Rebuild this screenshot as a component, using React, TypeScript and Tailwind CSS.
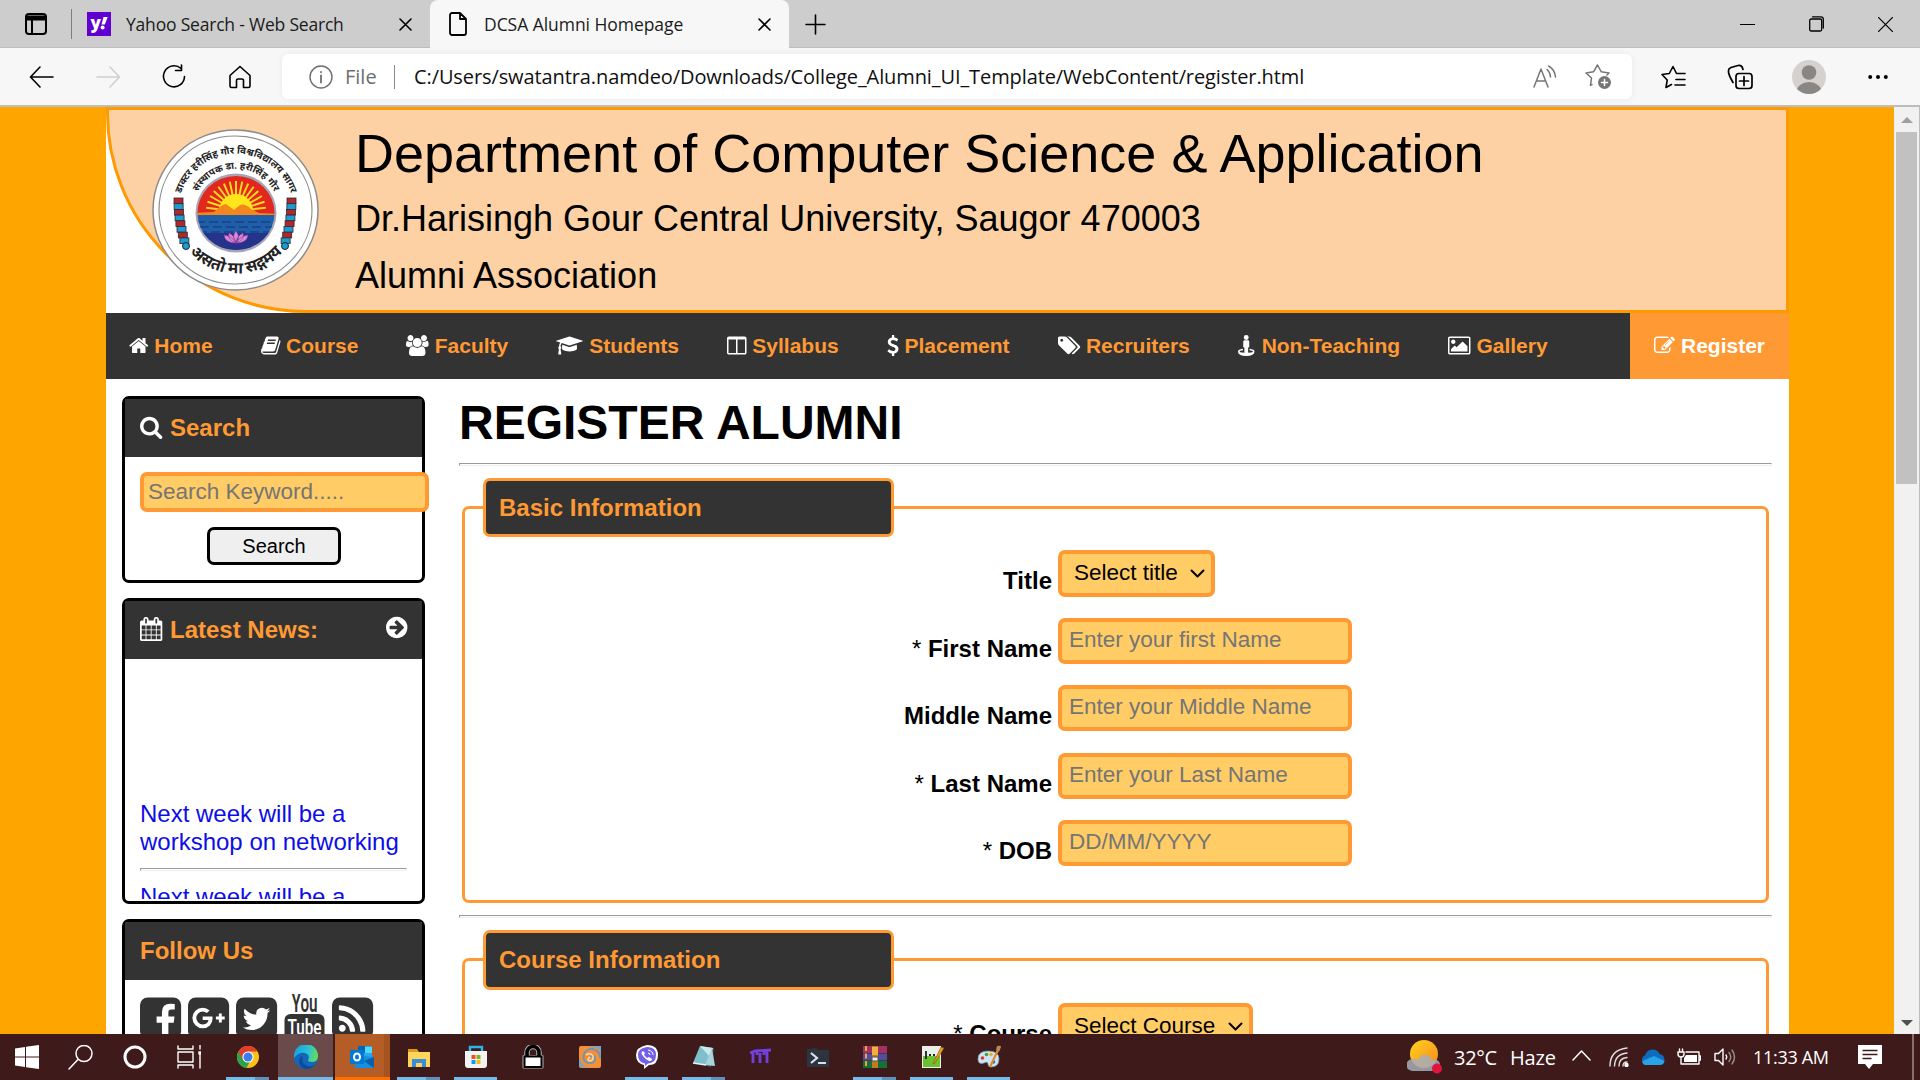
import React from "react";

type Glyph = { d: string; box: string; w: string };

const SQUARE = "v960q0 119-84.5 203.5t-203.5 84.5h-960q-119 0-203.5-84.5t-84.5-203.5v-960q0-119 84.5-203.5t203.5-84.5h960q119 0 203.5 84.5t84.5 203.5z";

const glyphs: Record<string, Glyph> = {
  home: { box: "64 0 1664 1792", w: "w-[0.93em]", d: "M1472 992v480q0 26-19 45t-45 19h-384v-384h-256v384h-384q-26 0-45-19t-19-45v-480q0-1 .5-3t.5-3l575-474 575 474q1 2 1 6zm223-69l-62 74q-8 9-21 11h-3q-13 0-21-7l-692-577-692 577q-12 8-24 7-13-2-21-11l-62-74q-8-10-7-23.5t11-21.5l719-599q32-26 76-26t76 26l244 204v-195q0-14 9-23t23-9h192q14 0 23 9t9 23v408l219 182q10 8 11 21.5t-7 23.5z" },
  book: { box: "64 0 1664 1792", w: "w-[0.93em]", d: "M1703 478q40 57 18 129l-275 906q-19 64-76.5 107.5t-122.5 43.5h-923q-77 0-148.5-53.5t-99.5-131.5q-24-67-2-127 0-4 3-27t4-37q1-8-3-21.5t-3-19.5q2-11 8-21t16.5-23.5 16.5-23.5q23-38 45-91.5t30-91.5q3-10 .5-30t-.5-28q3-11 17-28t17-23q21-36 42-92t25-90q1-9-2.5-32t.5-28q4-13 22-30.5t22-22.5q19-26 42.5-84.5t27.5-96.5q1-8-3-25.5t-2-26.5q2-8 9-18t18-23 17-21q8-12 16.5-30.5t15-35 16-36 19.5-32 26.5-23.5 36-11.5 47.5 5.5l-1 3q38-9 51-9h761q74 0 114 56t18 130l-274 906q-36 119-71.5 153.5t-128.5 34.5h-869q-27 0-38 15-11 16-1 43 24 70 144 70h923q29 0 56-15.5t35-41.5l300-987q7-22 5-57 38 15 59 43zm-1064 2q-4 13 2 22.5t20 9.5h608q13 0 25.5-9.5t16.5-22.5l21-64q4-13-2-22.5t-20-9.5h-608q-13 0-25.5 9.5t-16.5 22.5zm-83 256q-4 13 2 22.5t20 9.5h608q13 0 25.5-9.5t16.5-22.5l21-64q4-13-2-22.5t-20-9.5h-608q-13 0-25.5 9.5t-16.5 22.5z" },
  users: { box: "0 0 1920 1792", w: "w-[1.07em]", d: "M593 896q-162 5-265 128h-134q-82 0-138-40.5t-56-118.5q0-353 124-353 6 0 43.5 21t97.5 42.5 119 21.5q67 0 133-23-5 37-5 66 0 159 81 256zm1071 637q0 120-73 189.5t-194 69.5h-874q-121 0-194-69.5t-73-189.5q0-53 3.5-103.5t14-109 26.5-108.5 43-97.5 62-81 85.5-53.5 111.5-20q10 0 43 21.5t73 48 107 48 135 21.5 135-21.5 107-48 73-48 43-21.5q61 0 111.5 20t85.5 53.5 62 81 43 97.5 26.5 108.5 14 109 3.5 103.5zm-1024-1277q0 106-75 181t-181 75-181-75-75-181 75-181 181-75 181 75 75 181zm704 384q0 159-112.5 271.5t-271.5 112.5-271.5-112.5-112.5-271.5 112.5-271.5 271.5-112.5 271.5 112.5 112.5 271.5zm576 225q0 78-56 118.5t-138 40.5h-134q-103-123-265-128 93-126 93-284 0-29-5-66 66 23 133 23 59 0 119-21.5t97.5-42.5 43.5-21q124 0 124 353zm-128-609q0 106-75 181t-181 75-181-75-75-181 75-181 181-75 181 75 75 181z" },
  cap: { box: "0 0 2304 1792", w: "w-[1.286em]", d: "M1774 836l18 316q4 69-82 128t-235 93.5-323 34.5-323-34.5-235-93.5-82-128l18-316 574 181q22 7 48 7t48-7zm530-324q0 23-22 31l-1120 352q-4 1-10 1t-10-1l-652-206q-43 34-71 111.5t-34 178.5q63 36 63 109 0 69-58 107l58 433q2 14-8 25-9 11-24 11h-192q-15 0-24-11-10-11-8-25l58-433q-58-38-58-107 0-73 65-111 11-207 98-330l-333-104q-22-8-22-31t22-31l1120-352q4-1 10-1t10 1l1120 352q22 8 22 31z" },
  columns: { box: "64 0 1664 1792", w: "w-[0.93em]", d: "M224 1536h608v-1152h-640v1120q0 13 9.5 22.5t22.5 9.5zm1376-32v-1120h-640v1152h608q13 0 22.5-9.5t9.5-22.5zm128-1216v1216q0 66-47 113t-113 47h-1344q-66 0-113-47t-47-113v-1216q0-66 47-113t113-47h1344q66 0 113 47t47 113z" },
  usd: { box: "384 0 1024 1792", w: "w-[0.571em]", d: "M1362 1185q0 153-99.5 263.5t-258.5 136.5v175q0 14-9 23t-23 9h-135q-13 0-22.5-9.5t-9.5-22.5v-175q-66-9-127.5-31t-101.5-44.5-74-48-46.5-37.5-17.5-18q-17-21-2-41l103-135q7-10 23-12 15-2 24 9l2 2q113 99 243 125 37 8 74 8 81 0 142.5-43t61.5-122q0-28-15-53t-33.5-42-58.5-37.5-66-32-80-32.5q-39-16-61.5-25t-61.5-26.5-62.5-31-56.5-35.5-53.5-42.5-43.5-49-35.5-58-21-66.5-8.5-78q0-138 98-242t255-134v-180q0-13 9.5-22.5t22.5-9.5h135q14 0 23 9t9 23v176q57 6 110.5 23t87 33.5 63.5 37.5 39 29 15 14q17 18 5 38l-81 146q-8 15-23 16-14 3-27-7-3-3-14.5-12t-39-26.5-58.5-32-74.5-26-85.5-11.5q-95 0-155 43t-60 111q0 26 8.5 48t29.5 41.5 39.5 33 56 31 60.5 27 70 27.5q53 20 81 31.5t76 35 75.5 42.5 62 50 53 63.5 31.5 76.5 13 94z" },
  tags: { box: "128 0 1920 1792", w: "w-[1.07em]", d: "M576 448q0-53-37.5-90.5t-90.5-37.5-90.5 37.5-37.5 90.5 37.5 90.5 90.5 37.5 90.5-37.5 37.5-90.5zm1067 576q0 53-37 90l-491 492q-39 37-91 37-53 0-90-37l-715-716q-38-37-64.5-101t-26.5-117v-416q0-52 38-90t90-38h416q53 0 117 26.5t102 64.5l715 714q37 39 37 91zm384 0q0 53-37 90l-491 492q-39 37-91 37-36 0-59-14t-53-45l470-470q37-37 37-90 0-52-37-91l-715-714q-38-38-102-64.5t-117-26.5h224q53 0 117 26.5t102 64.5l715 714q37 39 37 91z" },
  street: { box: "192 0 1536 1792", w: "w-[0.857em]", d: "M896 0a210 210 0 1 1 0 420a210 210 0 0 1 0-420zM768 450h256q128 0 128 128v420q0 64-64 64h-32v380q0 64-64 64h-192q-64 0-64-64v-380h-32q-64 0-64-64v-420q0-128 128-128zM600 1165l22 127q-302 42-302 116 0 100 576 100t576-100q0-74-302-116l22-127q408 60 408 243 0 384-704 384t-704-384q0-183 408-243z" },
  image: { box: "-64 0 1920 1792", w: "w-[1.07em]", d: "M576 576q0 80-56 136t-136 56-136-56-56-136 56-136 136-56 136 56 56 136zm1024 384v448h-1408v-192l320-320 160 160 512-512zm96-704h-1600q-13 0-22.5 9.5t-9.5 22.5v1216q0 13 9.5 22.5t22.5 9.5h1600q13 0 22.5-9.5t9.5-22.5v-1216q0-13-9.5-22.5t-22.5-9.5zm160 32v1216q0 66-47 113t-113 47h-1600q-66 0-113-47t-47-113v-1216q0-66 47-113t113-47h1600q66 0 113 47t47 113z" },
  edit: { box: "0 0 1792 1792", w: "w-[1em]", d: "M888 1184l116-116-152-152-116 116v56h96v96h56zm440-720q-16-16-33 1l-350 350q-17 17-1 33t33-1l350-350q17-17 1-33zm80 594v190q0 119-84.5 203.5t-203.5 84.5h-832q-119 0-203.5-84.5t-84.5-203.5v-832q0-119 84.5-203.5t203.5-84.5h832q63 0 117 25 15 7 18 23 3 17-9 29l-49 49q-14 14-32 8-23-6-45-6h-832q-66 0-113 47t-47 113v832q0 66 47 113t113 47h832q66 0 113-47t47-113v-126q0-13 9-22l64-64q15-15 35-7t20 29zm-96-738l288 288-672 672h-288v-288zm444 132l-92 92-288-288 92-92q28-28 68-28t68 28l152 152q28 28 28 68t-28 68z" },
  search: { box: "64 0 1664 1792", w: "w-[0.93em]", d: "M1216 832q0-185-131.5-316.5t-316.5-131.5-316.5 131.5-131.5 316.5 131.5 316.5 316.5 131.5 316.5-131.5 131.5-316.5zm512 832q0 52-38 90t-90 38q-54 0-90-38l-343-342q-179 124-399 124-143 0-273.5-55.5t-225-150-150-225-55.5-273.5 55.5-273.5 150-225 225-150 273.5-55.5 273.5 55.5 225 150 150 225 55.5 273.5q0 220-124 399l343 343q37 37 37 90z" },
  calendar: { box: "64 0 1664 1792", w: "w-[0.93em]", d: "M192 1664h288v-288h-288v288zm352 0h320v-288h-320v288zm-352-352h288v-320h-288v320zm352 0h320v-320h-320v320zm-352-384h288v-288h-288v288zm736 736h320v-288h-320v288zm-384-736h320v-288h-320v288zm768 736h288v-288h-288v288zm-384-352h320v-320h-320v320zm-352-864v-288q0-13-9.5-22.5t-22.5-9.5h-64q-13 0-22.5 9.5t-9.5 22.5v288q0 13 9.5 22.5t22.5 9.5h64q13 0 22.5-9.5t9.5-22.5zm736 864h288v-320h-288v320zm-384-384h320v-288h-320v288zm384 0h288v-288h-288v288zm32-480v-288q0-13-9.5-22.5t-22.5-9.5h-64q-13 0-22.5 9.5t-9.5 22.5v288q0 13 9.5 22.5t22.5 9.5h64q13 0 22.5-9.5t9.5-22.5zm384-64v1280q0 52-38 90t-90 38h-1408q-52 0-90-38t-38-90v-1280q0-52 38-90t90-38h128v-96q0-66 47-113t113-47h64q66 0 113 47t47 113v96h384v-96q0-66 47-113t113-47h64q66 0 113 47t47 113v96h128q52 0 90 38t38 90z" },
  arrow: { box: "128 0 1536 1792", w: "w-[0.857em]", d: "M1413 896q0-27-18-45l-91-91-362-362q-18-18-45-18t-45 18l-91 91q-18 18-18 45t18 45l189 189h-502q-26 0-45 19t-19 45v128q0 26 19 45t45 19h502l-189 189q-19 19-19 45t19 45l91 91q18 18 45 18t45-18l362-362 91-91q18-18 18-45zm251 0q0 209-103 385.5t-279.5 279.5-385.5 103-385.5-103-279.5-279.5-103-385.5 103-385.5 279.5-279.5 385.5-103 385.5 103 279.5 279.5 103 385.5z" },
  facebook: { box: "128 0 1536 1792", w: "w-[0.857em]", d: "M1376 128q119 0 203.5 84.5t84.5 203.5v960q0 119-84.5 203.5t-203.5 84.5h-188v-595h199l30-232h-229v-148q0-56 23.5-84t91.5-28l122-1v-207q-63-9-178-9-136 0-217.5 80t-81.5 226v171h-200v232h200v595h-532q-119 0-203.5-84.5t-84.5-203.5v-960q0-119 84.5-203.5t203.5-84.5h960z" },
  google: { box: "128 0 1536 1792", w: "w-[0.857em]", d: "M1045 905q0-26-6-64h-362v132h217q-3 24-16.5 50t-37.5 53-66.5 44.5-96.5 17.5q-99 0-169-71t-70-171 70-171 169-71q92 0 153 59l104-101q-108-100-257-100-160 0-272 112.5t-112 271.5 112 271.5 272 112.5q165 0 266.5-105t101.5-270zm345 46h109v-110h-109v-110h-110v110h-110v110h110v110h110v-110zm274-535" + SQUARE },
  twitter: { box: "128 0 1536 1792", w: "w-[0.857em]", d: "M1408 610q-56 25-121 34 68-40 93-117-65 38-134 51-61-66-153-66-87 0-148.5 61.5t-61.5 148.5q0 29 5 48-129-7-242-65t-192-155q-29 50-29 106 0 114 91 175-47-1-100-26v2q0 75 50 133.5t123 72.5q-29 8-51 8-13 0-39-4 21 63 74.5 104t121.5 42q-116 90-261 90-26 0-50-3 148 94 322 94 112 0 210-35.5t168-95 120.5-137 75-162 24.5-168.5q0-18-1-27 63-45 105-109zm256-194" + SQUARE },
  rss: { box: "128 0 1536 1792", w: "w-[0.857em]", d: "M640 1280q0-53-37.5-90.5t-90.5-37.5-90.5 37.5-37.5 90.5 37.5 90.5 90.5 37.5 90.5-37.5 37.5-90.5zm351 94q-13-232-177-396t-396-177q-14-1-24 9t-10 23v128q0 13 8.5 22t21.5 10q154 11 264 121t121 264q1 13 10 21.5t22 8.5h128q13 0 23-10t9-24zm384 1q-5-154-56-297.5t-139.5-260-205-205-260-139.5-297.5-56q-14-1-23 9-10 10-10 23v128q0 13 9 22t22 10q204 7 378 111.5t278.5 278.5 111.5 378q1 13 10 22t22 9h128q13 0 23-10 11-9 9-23zM1664 416" + SQUARE },
};

function Fa({ name, className = "" }: { name: string; className?: string }) {
  const g = glyphs[name];
  return (
    <svg viewBox={g.box} className={`inline-block h-[1em] align-[-0.143em] overflow-visible fill-current ${g.w} ${className}`}>
      <path d={g.d} />
    </svg>
  );
}

const ui = "font-['Open_Sans','Noto_Sans',sans-serif]";

function Line({ d, w = 24, h = 24, sw = 1.6, className = "", children }: { d?: string; w?: number; h?: number; sw?: number; className?: string; children?: React.ReactNode }) {
  return (
    <svg width={w} height={h} viewBox={`0 0 ${w} ${h}`} fill="none" stroke="currentColor" strokeWidth={sw} strokeLinecap="round" strokeLinejoin="round" className={`shrink-0 ${className}`}>
      {d && <path d={d} />}
      {children}
    </svg>
  );
}

function TabBar() {
  return (
    <div className={`flex h-12 shrink-0 items-start bg-[#cdcdcd] text-[17.5px] text-[#1b1b1b] ${ui}`}>
      <div className="flex h-12 w-[430px] items-center pl-[25px] shadow-[inset_0_-1px_0_#bdbdbd]">
        <Line w={22} h={22} className="text-black" sw={2}>
          <rect x="1" y="1" width="20" height="20" rx="3" />
          <path d="M1 4h20M1 6h20" strokeWidth="3" />
          <path d="M7 7v13" />
        </Line>
        <div className="ml-6 h-[30px] w-px bg-[#7d7d7d]" />
        <svg width="24" height="24" viewBox="0 0 24 24" className="ml-[15px]">
          <path d="M0 0h24v24H0z" fill="#6001d2" />
          <text x="3.5" y="17" fill="#fff" fontSize="17" fontWeight="800" fontFamily="Open Sans">y</text>
          <path d="M16.5 5h4.2l-2.8 7.5h-3.4z" fill="#fff" />
          <circle cx="15.6" cy="15.6" r="2" fill="#fff" />
        </svg>
        <span className="ml-[15px] w-[273px] whitespace-nowrap tracking-[-0.2px]">Yahoo Search - Web Search</span>
        <Line w={13} h={13} d="M1 1l11 11M12 1L1 12" className="text-black" />
      </div>
      <div className="flex h-12 w-[359px] items-center rounded-t-lg bg-[#f7f7f7] pl-[19px]">
        <Line w={18} h={24} sw={1.8} d="M3 1h8l6 6v14a2 2 0 0 1-2 2H3a2 2 0 0 1-2-2V3a2 2 0 0 1 2-2zM11 1v6h6" className="text-black" />
        <span className="ml-[17px] w-[274px] whitespace-nowrap tracking-[-0.05px]">DCSA Alumni Homepage</span>
        <Line w={13} h={13} d="M1 1l11 11M12 1L1 12" className="text-black" />
      </div>
      <div className="flex h-12 flex-1 items-center pl-4 pr-[27px] text-black shadow-[inset_0_-1px_0_#bdbdbd]">
        <Line w={21} h={21} d="M10.5 1v19M1 10.5h19" />
        <div className="flex-1" />
        <Line w={15} h={15} sw={1.2} d="M0 7.5h15" className="mr-[54px]" />
        <Line w={15} h={16} sw={1.3} className="mr-[54px]">
          <rect x="0.7" y="3" width="12" height="12" rx="1.5" />
          <path d="M3.5 0.8h8.5q2.3 0 2.3 2.3v9" />
        </Line>
        <Line w={15} h={15} sw={1.2} d="M0 0l15 15M15 0L0 15" />
      </div>
    </div>
  );
}

function Toolbar() {
  return (
    <div className={`flex h-[57px] shrink-0 items-center bg-[#f7f7f7] pl-[29px] text-black ${ui}`}>
      <Line w={25} h={22} d="M11 1L1.5 11l9.500 10M2 11h22" />
      <Line w={25} h={22} d="M14 1l9.500 10-9.500 10M1 11h22" className="ml-[42px] text-[#cfcfcf]" />
      <Line w={26} h={25} className="ml-10" d="M23.500 12.500a10.500 10.500 0 1 1-3.500-8M20.500 1v5.500h-6" />
      <Line w={24} h={24} className="ml-[41px]" d="M2 10.500L12 1.500l10 9v10.500a1.500 1.500 0 0 1-1.500 1.500H15.500v-7a1.500 1.500 0 0 0-1.500-1.500h-4a1.500 1.500 0 0 0-1.500 1.500v7H3.500a1.500 1.500 0 0 1-1.500-1.500z" />
      <div className="ml-[30px] flex h-[45px] w-[1350px] items-center rounded-md bg-white pl-[27px] text-[20px] shadow-[0_0_6px_rgba(0,0,0,0.06)]">
        <Line w={24} h={24} className="text-[#6e6e6e]" sw={1.4}>
          <circle cx="12" cy="12" r="11" />
          <path d="M12 10.500v7M12 7v.3" strokeWidth="1.800" />
        </Line>
        <span className="ml-[12px] w-[49px] text-[20px] text-[#6e6e6e]">File</span>
        <div className="h-6 w-px bg-[#8a8a8a]" />
        <span className="ml-[19px] w-[1119px] whitespace-nowrap text-[20px] tracking-[-0.1px] text-[#101010]">C:/Users/swatantra.namdeo/Downloads/College_Alumni_UI_Template/WebContent/register.html</span>
        <Line w={24} h={24} className="text-[#767676]" sw={1.5} d="M1 22L8 4l7 18M3.500 16h9M14 4.500q3 2.500 3.500 7.500M15.500 1q6 3 7 11" />
        <Line w={27} h={27} className="ml-7 text-[#767676]" sw={1.5}>
          <path d="M7 21.500l-1.500 1 1-7.500-5.500-5 7.500-1.200L12.500 2l3.800 6.800 7.700 1.200-2 2" />
          <circle cx="19.500" cy="19.500" r="6.500" fill="currentColor" stroke="none" />
          <path d="M19.500 16.500v6M16.500 19.500h6" stroke="#fff" />
        </Line>
      </div>
      <Line w={26} h={24} className="ml-[29px]" sw={1.6} d="M10.500 19.500l-5.500 3 1.200-7.500L1 9.500l7.300-1L12 1.500l3.500 7h8.500M15 14.500h9M14 20h10" />
      <Line w={26} h={26} className="ml-10" sw={1.700}>
        <path d="M6 18.500Q1 10 1.500 6.500Q1.500 4.500 4 3.500L11 1.500q4-1 5 4" />
        <rect x="9" y="9.500" width="16" height="15" rx="3" />
        <path d="M17 12.500v9M12.500 17h9" />
      </Line>
      <svg width="34" height="34" viewBox="0 0 34 34" className="ml-[39px]">
        <defs><clipPath id="avatar"><circle cx="17" cy="17" r="17" /></clipPath></defs>
        <g clipPath="url(#avatar)">
          <path d="M0 0h34v34H0z" fill="#d4d1ce" />
          <circle cx="17" cy="12.500" r="7.300" fill="#8a8683" />
          <ellipse cx="17" cy="32" rx="12.500" ry="10" fill="#8a8683" />
        </g>
      </svg>
      <svg width="20" height="6" viewBox="0 0 20 6" className="ml-[42px]"><circle cx="2.200" cy="3" r="2" /><circle cx="10" cy="3" r="2" /><circle cx="17.800" cy="3" r="2" /></svg>
    </div>
  );
}

const rays = Array.from({ length: 15 }, (_, i) => (Math.PI * (i + 0.5)) / 15);
const bands = [0, 1, 2, 3, 4, 5, 6, 7];

function Logo() {
  return (
    <svg width="167" height="162" viewBox="0 0 167 162" className="shrink-0">
      <defs>
        <path id="arcOuter" d="M27 72A58 58 0 0 1 141 72" />
        <path id="arcInner" d="M42 72A43.500 43.500 0 0 1 126 72" />
        <path id="arcLower" d="M28 109A62 62 0 0 0 140 109" />
        <clipPath id="disc"><ellipse cx="84" cy="84" rx="38.500" ry="37" /></clipPath>
      </defs>
      <ellipse cx="83.500" cy="81" rx="82.500" ry="80" fill="#fff" stroke="#8b8b8b" strokeWidth="1.500" />
      <ellipse cx="83.500" cy="81" rx="76.500" ry="74" fill="none" stroke="#8e8e8e" strokeWidth="1.200" />
      <g fill="#222" fontWeight="700" fontFamily="Noto Sans Devanagari, Noto Sans, sans-serif" textAnchor="middle">
        <text fontSize="9.800"><textPath href="#arcOuter" startOffset="50%">डाक्टर हरीसिंह गौर विश्वविद्यालय सागर</textPath></text>
        <text fontSize="9.600"><textPath href="#arcInner" startOffset="50%">संस्थापक डा. हरीसिंह गौर</textPath></text>
        <text fontSize="16"><textPath href="#arcLower" startOffset="50%">असतो मा सद्गमय</textPath></text>
      </g>
      <ellipse cx="84" cy="84" rx="40.500" ry="39.500" fill="#a8a4b8" />
      <g clipPath="url(#disc)">
        <path d="M40 40h90v45H40z" fill="#e2271d" />
        {rays.map((a) => (
          <path key={a} stroke="#ffd91f" strokeWidth="2" d={`M${84 - Math.cos(a) * 13} ${82 - Math.sin(a) * 13}L${84 - Math.cos(a) * 30} ${82 - Math.sin(a) * 30}`} />
        ))}
        <circle cx="84" cy="82" r="17" fill="#ffe51a" />
        <path d="M42 84l20-1q8-8 12-8l8 6 6-5q5-2 11 4l8 4 22 1v3H42z" fill="#f5851f" />
        <path d="M40 86h90v40H40z" fill="#1f5fa8" />
        <path d="M44 93h78M48 98h72M46 103h74" stroke="#1b3f8c" strokeWidth="1.500" strokeDasharray="9 4" />
        <path d="M40 104h90v26H40z" fill="#26338b" />
        <path d="M84 114q-5-6 0-12 5 6 0 12q-9-3-7-10 6 3 7 10q9-3 7-10-6 3-7 10q-11 0-12-8 8 1 12 8q11 0 12-8-8 1-12 8" fill="#d98ad6" stroke="#8f3aa0" strokeWidth=".6" />
      </g>
      {bands.map((i) => {
        const y = 69 + i * 5.7;
        const x = 22 + i * i * 0.12;
        return (
          <g key={i} fill={i % 2 ? "#1e9bd0" : "#b3262c"} stroke="#2a2a33" strokeWidth=".8">
            <rect x={x} y={y} width="9" height="5.700" />
            <rect x={159 - x} y={y} width="9" height="5.700" transform="translate(-2 0)" />
          </g>
        );
      })}
      <circle cx="34" cy="117" r="3.500" fill="#1e9bd0" stroke="#222" />
      <circle cx="133" cy="117" r="3.500" fill="#1e9bd0" stroke="#222" />
    </svg>
  );
}

function Header() {
  return (
    <header className="flex h-[206px] shrink-0 rounded-bl-[200px] border-[3px] border-[#ff9900] bg-[#fed1a4] pl-[43px] pt-[19px]">
      <Logo />
      <div className="ml-[36px] whitespace-nowrap text-black">
        <div className="-mt-1.5 text-[54px] leading-[60px]">Department of Computer Science &amp; Application</div>
        <div className="mt-4 text-[36px] leading-10">Dr.Harisingh Gour Central University, Saugor 470003</div>
        <div className="mt-[17px] text-[36px] leading-10">Alumni Association</div>
      </div>
    </header>
  );
}

const nav = [
  ["home", "Home"], ["book", "Course"], ["users", "Faculty"], ["cap", "Students"], ["columns", "Syllabus"],
  ["usd", "Placement"], ["tags", "Recruiters"], ["street", "Non-Teaching"], ["image", "Gallery"],
];

function Nav() {
  return (
    <nav className="flex h-[66px] shrink-0 items-center bg-[#333] text-[21px] font-bold leading-6 text-[#ff9933]">
      {nav.map(([icon, label]) => (
        <a key={label} className="whitespace-nowrap px-6 first:pl-[23px]"><Fa name={icon} className="text-white" /> {label}</a>
      ))}
      <a className="ml-auto flex h-full items-center bg-[#ff9933] px-6 text-white"><span className="whitespace-nowrap"><Fa name="edit" /> Register</span></a>
    </nav>
  );
}

function Panel({ title, icon, extra, className, children }: { title: string; icon?: string; extra?: React.ReactNode; className: string; children: React.ReactNode }) {
  return (
    <section className={`shrink-0 rounded-[7px] border-[3px] border-black bg-white ${className}`}>
      <h2 className="flex h-[58px] items-center bg-[#333] px-[15px] text-[24px] font-bold leading-7 text-[#ff9933]">
        <span className="whitespace-nowrap">{icon && <><Fa name={icon} className="mr-px text-white" /> </>}{title}</span>
        {extra}
      </h2>
      {children}
    </section>
  );
}

const Rule = ({ className = "" }: { className?: string }) => <div className={`h-[3px] shrink-0 border border-[#9a9a9a] border-b-[#eee] border-r-[#eee] ${className}`} />;

function Sidebar() {
  return (
    <aside className="flex w-[303px] shrink-0 flex-col gap-[15px] pt-[17px]">
      <Panel title="Search" icon="search" className="h-[187px]">
        <div className="flex flex-col items-start pl-[15px] pt-[15px]">
          <input placeholder="Search Keyword....." className="h-10 w-[289px] shrink-0 rounded-[7px] border-4 border-[#ff9933] bg-[#ffcc66] px-1 pb-px text-[22.5px] placeholder:text-[#757575]" />
          <button className="ml-[67px] mt-[15px] h-[38px] w-[134px] rounded-[7px] border-[3px] border-black bg-[#efefef] text-[20px] leading-7 text-black">Search</button>
        </div>
      </Panel>
      <Panel title="Latest News:" icon="calendar" className="h-[306px]" extra={<Fa name="arrow" className="ml-auto -mt-1.5 text-[25px] text-white" />}>
        <div className="mx-[15px] flex h-[240px] flex-col overflow-hidden pt-[141px] text-[24px] leading-7 text-[#0d0de8]">
          <p className="shrink-0">Next week will be a workshop on networking</p>
          <Rule className="mb-2.5 mt-3" />
          <p className="shrink-0 pt-[2px]">Next week will be a workshop on networking</p>
        </div>
      </Panel>
      <Panel title="Follow Us" className="h-[220px]">
        <div className="flex gap-[6.900px] pl-[15px] pt-[14px] text-[48px] text-[#333]">
          <Fa name="facebook" />
          <Fa name="google" />
          <Fa name="twitter" />
          <svg width="41" height="48" viewBox="0 0 41 48" fill="#333" fontFamily="Roboto, sans-serif" fontWeight="600">
            <text x="7.500" y="18" fontSize="25" textLength="26" lengthAdjust="spacingAndGlyphs">You</text>
            <rect x="0.500" y="20" width="40" height="27" rx="6" />
            <text x="3.500" y="41" fontSize="22" textLength="34" lengthAdjust="spacingAndGlyphs" fill="#fff">Tube</text>
          </svg>
          <Fa name="rss" />
        </div>
      </Panel>
    </aside>
  );
}

function Legend({ children, height }: { children: string; height: string }) {
  return <div className={`-mt-[31px] ml-[18px] flex w-[411px] shrink-0 items-center rounded-[7px] border-[3px] border-[#ff9933] bg-[#333] px-[13px] text-[24px] font-bold leading-7 text-[#ff9933] ${height}`}>{children}</div>;
}

function Label({ text, required }: { text: string; required?: boolean }) {
  return <label className="mr-[6px] w-[587px] pt-[17px] text-right text-[24px] font-bold leading-7 text-black">{required && <span className="font-normal">* </span>}{text}</label>;
}

function Select({ label, width }: { label: string; width: string }) {
  return (
    <div className={`flex h-[47px] items-center justify-between rounded-[7px] border-4 border-[#ff9933] bg-[#ffcc66] pb-0.5 pl-[12px] pr-[6px] text-[22.5px] leading-[27px] text-black ${width}`}>
      <span className="whitespace-nowrap">{label}</span>
      <Line w={15} h={9} sw={2} d="M1.500 1.500l6 6 6-6" className="mt-0.5" />
    </div>
  );
}

const fields: [string, boolean, string][] = [
  ["First Name", true, "Enter your first Name"],
  ["Middle Name", false, "Enter your Middle Name"],
  ["Last Name", true, "Enter your Last Name"],
  ["DOB", true, "DD/MM/YYYY"],
];

function Main() {
  return (
    <main className="ml-[34px] flex w-[1313px] shrink-0 flex-col pt-4 text-black">
      <h1 className="h-[68px] shrink-0 text-[48px] font-bold leading-[56px]">REGISTER ALUMNI</h1>
      <Rule />
      <div className="ml-[3px] mt-10 flex h-[397px] w-[1307px] shrink-0 flex-col rounded-[7px] border-[3px] border-[#ff9933]">
        <Legend height="h-[59px]">Basic Information</Legend>
        <div className="mt-[13px] flex flex-col">
          <div className="flex h-[68px] items-start"><Label text="Title" /><Select label="Select title" width="w-[157px]" /></div>
          {fields.map(([text, required, hint]) => (
            <div key={text} className="flex h-[67.300px] items-start">
              <Label text={text} required={required} />
              <input placeholder={hint} className="h-[46px] w-[294px] rounded-[7px] border-4 border-[#ff9933] bg-[#ffcc66] px-[7px] pb-0.5 text-[22.5px] placeholder:text-[#757575]" />
            </div>
          ))}
        </div>
      </div>
      <Rule className="mt-3" />
      <div className="ml-[3px] mt-10 flex h-[397px] w-[1307px] shrink-0 flex-col rounded-[7px] border-[3px] border-[#ff9933]">
        <Legend height="h-[60px]">Course Information</Legend>
        <div className="mt-[13px] flex items-start"><Label text="Course" required /><Select label="Select Course" width="w-[195px]" /></div>
      </div>
    </main>
  );
}

const apps: Record<string, React.ReactNode> = {
  chrome: (
    <>
      <circle cx="12" cy="12" r="11" fill="#fbc116" />
      <path d="M12 12L2.500 6.500A11 11 0 0 0 10.500 23L15 14z" fill="#2ba24c" />
      <path d="M2.500 6.500A11 11 0 0 1 21.500 6.500H12L7 15z" fill="#e33b2e" />
      <circle cx="12" cy="12" r="5.600" fill="#fff" /><circle cx="12" cy="12" r="4.500" fill="#3b7ded" />
    </>
  ),
  edge: (
    <>
      <defs><linearGradient id="eg" x1="0" x2="1" y1=".3" y2="0.500"><stop stopColor="#1b9de2" /><stop offset=".6" stopColor="#2cc3cf" /><stop offset="1" stopColor="#67dd55" /></linearGradient></defs>
      <circle cx="12" cy="12" r="12" fill="#1168b8" />
      <path d="M0 11A12 12 0 0 1 24 11q0 6-6.500 6-4.500 0-3-3 1.500-5-4-6T0 13z" fill="url(#eg)" />
      <path d="M9 11q-3 7 4 10 5 2 9-3-3 6-10 6Q6 23 5 17q0-5 4-6z" fill="#0c4a9c" />
    </>
  ),
  outlook: (
    <>
      <path d="M8 1h14v13H8z" fill="#28a8ea" /><path d="M15 2h7v6h-7z" fill="#50d9ff" /><path d="M8 1h7v7H8z" fill="#0364b8" />
      <path d="M5 10l19 2v11H5z" fill="#1490df" /><path d="M24 12v11L14 16z" fill="#0a5fa8" />
      <path d="M0 5h14v14H0z" fill="#0078d4" /><ellipse cx="7" cy="12" rx="3" ry="3.500" fill="none" stroke="#fff" strokeWidth="2" />
    </>
  ),
  explorer: (<><path d="M1 4h9l2 3H1z" fill="#dd9a12" /><path d="M1 7h22v15H1z" fill="#fdd45c" /><path d="M5 22v-8h14v8h-4v-4H9v4z" fill="#3a8ddb" /></>),
  store: (
    <>
      <path d="M6 7V2h12v5" fill="none" stroke="#28b5e8" strokeWidth="2.400" /><path d="M1 6h22v14a3 3 0 0 1-3 3H4a3 3 0 0 1-3-3z" fill="#f3f3f3" />
      <path d="M7.500 10h4v4h-4z" fill="#f04f23" /><path d="M12.500 10h4v4h-4z" fill="#7db81a" /><path d="M7.500 15h4v4h-4z" fill="#05a3ef" /><path d="M12.500 15h4v4h-4z" fill="#fdb813" />
    </>
  ),
  lock: (<><path d="M6 11V7.500a6 6 0 0 1 12 0V11" fill="none" stroke="#b5b0b0" strokeWidth="5.500" /><rect x="1.500" y="10" width="21" height="13.500" rx="1" fill="#b5b0b0" /><path d="M6 12V7.500a6 6 0 0 1 12 0V12" fill="none" stroke="#000" strokeWidth="3.500" /><rect x="3.500" y="11.500" width="17" height="10.500" fill="#fff" stroke="#000" strokeWidth="2" /></>),
  swirl: (
    <>
      <rect x="1" y="1" width="22" height="22" rx="2" fill="#f0913a" />
      <path d="M10 1h13v10q-1-8-8-9-4 0-5-1zM1 12q2 8 9 10h-9z" fill="#7fa3c4" />
      <path d="M12 12q4-3 5 1 0 6-7 5-6-2-4-9 3-6 9-5 7 2 7 9" fill="none" stroke="#6f93b5" strokeWidth="1.800" />
      <path d="M12 12q-4 3 0 4 4-1 3-5-3-4-7-1" fill="none" stroke="#fcd7a8" strokeWidth="1.600" />
    </>
  ),
  viber: (<><path d="M12 0q11 0 11 10t-9 10l-5 4v-4Q1 18 1 10T12 0z" fill="#fff" /><path d="M12 2q9 0 9 8t-8 8.500L10 21v-2.500Q3 17 3 10t9-8z" fill="#7360e8" /><path d="M8 6q-3 1 0 5t6 5q3 0 3-2l-3-2-2 1-3-3 1-2z" fill="#fff" /><path d="M13 5q5 1 5 5M13 8q2 0 2 2" fill="none" stroke="#fff" /></>),
  notepad: (<><path d="M8 2l14 1-3 19-8-2z" fill="#2e5d68" /><path d="M8 1l13 2-7 17L1 18z" fill="#7fbfcb" /><path d="M8 1l13 2-4 8z" fill="#c8e9ee" /><path d="M20 3l3 18-10-1z" fill="#a9d3da" /><path d="M1 18l13 2" stroke="#e6f2f4" strokeWidth="1.500" /></>),
  comb: (<path d="M1 8l5-2 16-1M4 7v11M11 8v10M18 6v12M8 7v3M15 7v3" fill="none" stroke="#7040e0" strokeWidth="2.800" />),
  terminal: (<><path d="M1 4l9-1 2 2h11v17H1z" fill="#2c3440" /><path d="M5 8l6 5-6 5M12 18h8" fill="none" stroke="#dce1e7" strokeWidth="2.200" /></>),
  rar: (
    <>
      <path d="M0 1h24v7H0z" fill="#a33063" /><path d="M0 8.500h24v7H0z" fill="#514f9b" /><path d="M0 16h24v7H0z" fill="#14703a" />
      <path d="M3 1v22" stroke="#e9a43b" strokeWidth="2" strokeDasharray="5 2.500" /><path d="M9 1h6v22H9z" fill="#c47a20" /><path d="M9 2h6v8H9z" fill="#f0b040" /><path d="M9 12h6v4H9z" fill="#eee" stroke="#555" />
    </>
  ),
  npp: (<><path d="M2 1h19v22H2z" fill="#e9efe6" /><path d="M3 11h17v11H3z" fill="#6cc130" /><path d="M6 14V6M9 10h2M13 10h2" stroke="#222" strokeWidth="1.800" fill="none" /><path d="M21 2l3 1-9 15-2 1z" fill="#f0a020" stroke="#7d4a10" strokeWidth=".6" /></>),
  paint: (
    <>
      <path d="M11 6q11 0 11 8 0 8-8 8-3 0-3-3t-4-1q-6 2-6-4 0-8 10-8z" fill="#cfe4f2" stroke="#6d93ad" strokeWidth=".7" />
      <circle cx="5.500" cy="13" r="1.800" fill="#d33" /><circle cx="9.500" cy="9.500" r="1.800" fill="#3a3" /><circle cx="14" cy="9.500" r="1.800" fill="#e8b020" /><circle cx="16.500" cy="17" r="1.800" fill="#36c" />
      <path d="M21 5l-8 17" stroke="#e08a28" strokeWidth="2.200" /><path d="M19 5l1-4q4-1 4 1l-2 5z" fill="#b48a5c" />
    </>
  ),
};

const running: [string, "none" | "one" | "two"][] = [
  ["explorer", "two"], ["store", "one"], ["lock", "none"], ["swirl", "none"], ["viber", "one"], ["notepad", "two"],
  ["comb", "none"], ["terminal", "none"], ["rar", "two"], ["npp", "one"], ["paint", "one"],
];

function TaskButton({ name, bar }: { name: string; bar: "none" | "one" | "two" }) {
  return (
    <div className="flex h-full w-[57px] shrink-0 flex-col items-center">
      <svg width="24" height="24" viewBox="0 0 24 24" className="mt-[11px]">{apps[name]}</svg>
      <div className="mt-[8px] flex h-[3px] w-[43px]">
        {bar !== "none" && <div className="flex-1 bg-[#76b9ed]" />}
        {bar === "two" && <div className="w-[14px] bg-[#5f8fbd]" />}
      </div>
    </div>
  );
}

function Taskbar() {
  return (
    <footer className={`flex h-[46px] shrink-0 items-center bg-[#3f1a1b] text-white ${ui}`}>
      <div className="flex w-[219px] shrink-0 items-center">
        <svg width="24" height="24" viewBox="0 0 24 24" className="ml-[15px]" fill="#fff"><path d="M0 3.500L10 2v9.500H0zM11 1.800L24 0v11.500H11zM0 12.500h10V22L0 20.500zM11 12.500h13V24l-13-1.800z" /></svg>
        <Line w={25} h={25} sw={1.500} className="ml-[29px]"><circle cx="16" cy="8.500" r="8" /><path d="M10 14.500L1 24" /></Line>
        <Line w={24} h={24} sw={3} className="ml-[30px]"><circle cx="12" cy="12" r="10" /></Line>
        <Line w={24} h={24} sw={1.400} className="ml-[30px]">
          <path d="M1 1v3h15V1M1 23v-3h15v3M23 0v4M23 10v13" /><rect x="1" y="7" width="15" height="10" /><rect x="22" y="7" width="2" height="2" fill="#fff" />
        </Line>
      </div>
      <TaskButton name="chrome" bar="two" />
      <div className="ml-0.5 flex h-full w-[55px] shrink-0 flex-col items-center bg-[#6b4a4b]">
        <svg width="24" height="24" viewBox="0 0 24 24" className="mt-[11px]">{apps.edge}</svg>
        <div className="mt-auto h-[3px] w-full bg-[#76b9ed]" />
      </div>
      <div className="ml-0.5 flex h-full w-[55px] shrink-0 flex-col bg-[#b55d26]">
        <div className="flex flex-1 border-r-[6px] border-[#a55420]">
          <svg width="24" height="24" viewBox="0 0 24 24" className="ml-[15px] mt-[11px]">{apps.outlook}</svg>
        </div>
        <div className="h-[3px] bg-[#ff6f00]" />
      </div>
      {running.map(([name, bar]) => <TaskButton key={name} name={name} bar={bar} />)}
      <div className="ml-auto flex h-full shrink-0 items-center whitespace-nowrap text-[20px]">
        <svg width="36" height="34" viewBox="0 0 36 34">
          <defs><linearGradient id="sun" x1="0" y1="0" x2="1" y2="1"><stop stopColor="#ffd51e" /><stop offset="1" stopColor="#f7861d" /></linearGradient></defs>
          <circle cx="17" cy="14" r="14" fill="url(#sun)" />
          <path d="M6 31a6 6 0 0 1-1-12q4-1 6 1 2-6 8-5 5 1 6 5 8-1 8 5 0 6-6 6z" fill="#a8aeb9" fillOpacity=".85" />
          <circle cx="30" cy="28.500" r="5" fill="#e0143c" />
        </svg>
        <span className="ml-[11px] mt-0.5 w-[56px] text-[20px] tracking-[-0.3px]">32°C</span>
        <span className="mt-0.5 w-[62px] text-[20px] tracking-[-0.2px]">Haze</span>
        <Line w={19} h={11} sw={1.500} d="M1 10l8.500-9L18 10" className="-mt-1" />
        <Line w={20} h={20} sw={1.400} className="ml-[18px]">
          <path d="M1 19Q1 3 18 1M5.500 19Q6 7 18 6M10 19q0-8 8-8.500M14 19q0-4 4-4" opacity=".85" /><circle cx="17.500" cy="18" r="1.500" fill="#fff" />
        </Line>
        <svg width="24" height="17" viewBox="0 0 24 17" className="ml-3"><path d="M5 16a5 5 0 0 1-1-9.500Q6 0 12.500.5 17 1 18.500 5q5 1 5 6 0 5-5 5z" fill="#0f6cbd" /><path d="M4 16q-3-1-2.500-4L13 7l10.500 5q-1 4-5 4z" fill="#29a3e8" /></svg>
        <Line w={24} h={18} sw={1.400} className="ml-3">
          <path d="M2.500 1v3M5.500 1v3M1 4h6v2a3 3 0 0 1-6 0zM4 9v7h18V4H9M22 8h1.500v4H22" /><path d="M9 7h11v7H7v-4z" fill="#fff" stroke="none" />
        </Line>
        <Line w={22} h={20} sw={1.400} className="ml-[13px]"><path d="M1 6.500h3.500L9 2v16l-4.500-4.500H1zM12 8q1.500 2 0 4" /><path d="M15 5.500q3.500 4.500 0 9M18 3q5 7 0 14" opacity=".5" /></Line>
        <span className="ml-[17px] w-[105px] text-[18px] tracking-[-0.3px]">11:33 AM</span>
        <svg width="24" height="24" viewBox="0 0 24 24"><path d="M0 0h24v19H15l-4 5-4-5H0z" fill="#fff" /><path d="M4.500 5.500h15M4.500 9.500h15M4.500 13.500h9" stroke="#3f1a1b" strokeWidth="1.400" /></svg>
        <div className="ml-[30px] mr-1.5 h-full w-[2px] bg-[#8a6d6d]" />
      </div>
    </footer>
  );
}

export default function App() {
  return (
    <div className="flex h-[1080px] w-[1920px] flex-col overflow-hidden bg-[#ffa500]">
      <TabBar />
      <Toolbar />
      <div className="h-0.5 shrink-0 bg-[#bdbdbd]" />
      <div className="flex min-h-0 flex-1 overflow-hidden font-['Liberation_Sans',Arial,sans-serif]">
        <div className="ml-[106px] flex w-[1683px] shrink-0 flex-col bg-white">
          <Header />
          <Nav />
          <div className="flex min-h-0 flex-1 pl-4">
            <Sidebar />
            <Main />
          </div>
        </div>
        <div className="ml-auto flex w-[26px] shrink-0 flex-col items-center border-r border-[#bdbdbd] bg-[#f1f1f1]">
          <svg width="12" height="6" viewBox="0 0 12 6" className="mt-[10px]"><path d="M0 6l6-6 6 6z" fill="#a0a0a0" /></svg>
          <div className="mt-[9px] h-[352px] w-[21px] bg-[#c1c1c1]" />
          <svg width="12" height="6" viewBox="0 0 12 6" className="mb-2 mt-auto"><path d="M0 0l6 6 6-6z" fill="#505050" /></svg>
        </div>
      </div>
      <Taskbar />
    </div>
  );
}
